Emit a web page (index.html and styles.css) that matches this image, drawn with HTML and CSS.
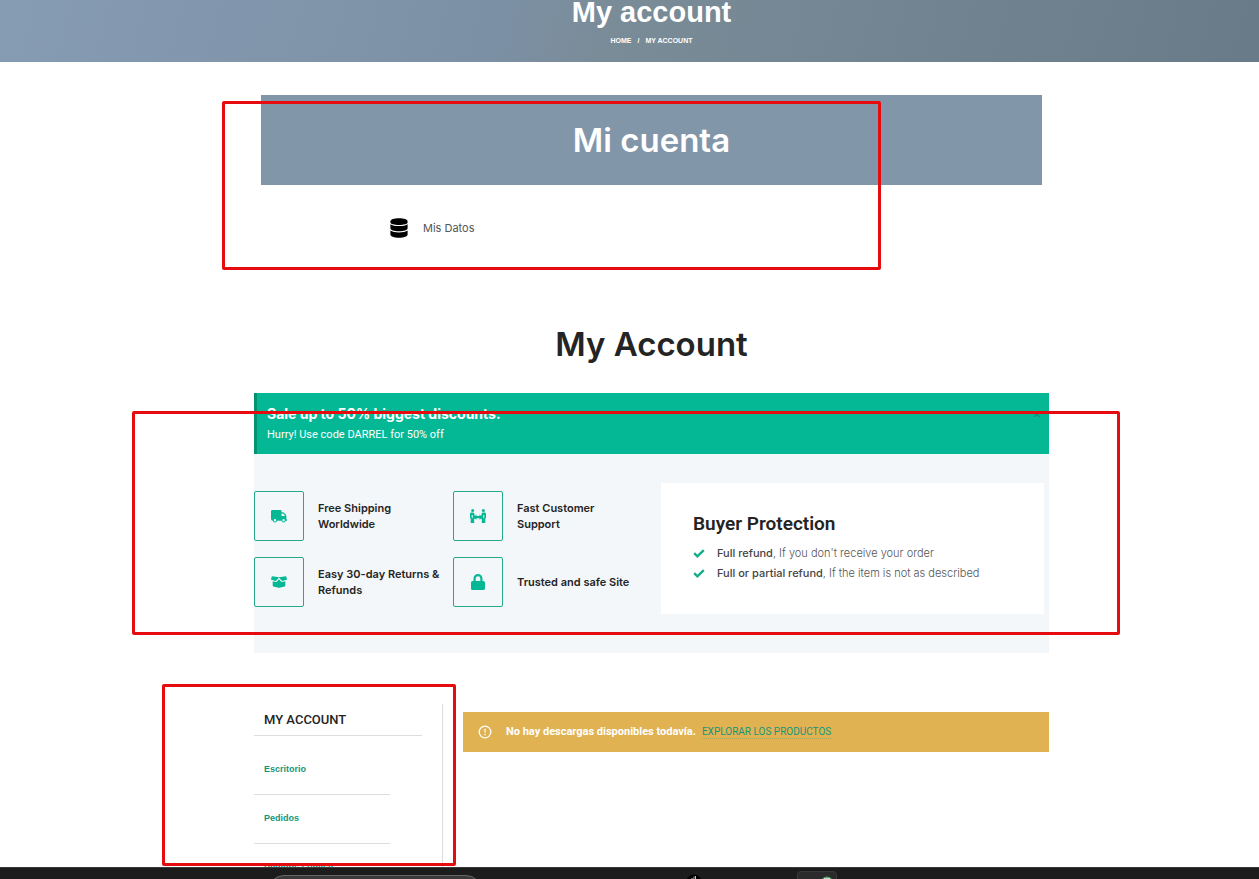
FILE: index.html
```html
<!DOCTYPE html>
<html lang="es">
<head>
    <meta charset="utf-8">
    <title>My account</title>
    <link rel="stylesheet" href="styles.css">
</head>
<body>
    <div class="page">
        <!-- Page title -->
        <header class="page-title">
            <h1>My account</h1>
            <nav class="breadcrumbs">
                <a href="#">Home</a>
                <span>/</span>
                <span>My account</span>
            </nav>
        </header>

        <main class="container">
            <!-- Mi cuenta -->
            <section class="mi-cuenta">
                <h2 class="banner">Mi cuenta</h2>
                <a class="datos" href="#">
                    <svg viewBox="0 0 18 20" width="18" height="20">
                        <path d="M.4 3.500C.4 1.500 4 .3 9 .3s8.600 1.200 8.600 3.200v.8C17.600 6.200 13.800 7 9 7S.4 6.200.4 4.300z"/>
                        <path d="M.4 6.300C2 7.600 5.500 8.100 9 8.100s7-.5 8.600-1.800v3.900c0 1.900-3.800 3-8.600 3s-8.600-1.100-8.600-3z"/>
                        <path d="M.4 12.600C2 13.900 5.500 14.500 9 14.500s7-.6 8.600-1.900v3.900c0 2-3.800 3.200-8.600 3.200s-8.600-1.200-8.600-3.200z"/>
                    </svg>
                    <span>Mis Datos</span>
                </a>
                <div class="mark mark-datos"></div>
            </section>

            <h2 class="heading">My Account</h2>

            <!-- Promo -->
            <section class="promo">
                <div class="alert">
                    <div>
                        <strong>Sale up to 50% biggest discounts.</strong>
                        <p>Hurry! Use code DARREL for 50% off</p>
                    </div>
                    <button class="close" aria-label="Cerrar">×</button>
                </div>
                <div class="benefits">
                    <ul class="features">
                        <li>
                            <span class="icon">
                                <svg viewBox="0 0 16 13" width="16" height="13">
                                    <path fill-rule="evenodd" d="M1.300 0h8.200q1 0 1 1v1.200h1.500q.6 0 1 .5l2 2.300q.4.400.4 1V9.500h.6v1.200h-1.200a2.200 2.200 0 0 1-4.300 0H6.100a2.200 2.200 0 0 1-4.300 0Q0 10.500 0 9V1.300Q0 0 1.300 0zM10.500 3.400v2.700h3.700L12 3.400zM4 9.100a1.200 1.200 0 1 0 0 2.400 1.200 1.200 0 0 0 0-2.400zm8.600 0a1.200 1.200 0 1 0 0 2.400 1.200 1.200 0 0 0 0-2.400z"/>
                                </svg>
                            </span>
                            <span>Free Shipping<br>Worldwide</span>
                        </li>
                        <li>
                            <span class="icon">
                                <svg viewBox="0 0 16 14" width="16" height="14">
                                    <circle cx="2.600" cy="1.500" r="1.500"/>
                                    <circle cx="13.400" cy="1.500" r="1.500"/>
                                    <path d="M0 5q0-1.400 1.400-1.400h1.700q1 0 1.200 1l.5 2.300L6.500 5.500v1.400h3V5.500l1.700 1.400.5-2.300q.2-1 1.200-1h1.700Q16 3.600 16 5v3.800l-.7 1V14h-3.500v-3.400l-.6-1.200-1.700 1.400V9.200h-3v1.600L4.800 9.400l-.6 1.200V14H.7V9.800l-.7-1z"/>
                                    <path class="cut" d="M1.700 6v2.500l1 .8V6zM14.300 6v2.500l-1 .8V6z"/>
                                </svg>
                            </span>
                            <span>Fast Customer<br>Support</span>
                        </li>
                        <li>
                            <span class="icon">
                                <svg viewBox="0 0 16 12" width="16" height="12">
                                    <path d="M1.300.3 8 1.200l6.700-.9q.4 0 .5.300l.8 2.600q0 .5-.4.600l-4.200 1.100q-.5.100-.8-.3L8 1.500 5.400 4.600q-.3.400-.8.300L.4 3.800Q0 3.700 0 3.200L.8.600q.1-.3.500-.3z"/>
                                    <path d="M1.700 5.200 5 6q.6.100 1-.4l2-2.400 2 2.400q.4.500 1 .4l3.300-.8v4.300q0 .8-.7 1L8.500 11.700q-.5.100-1 0L2.400 10.500q-.7-.2-.7-1z"/>
                                </svg>
                            </span>
                            <span>Easy 30-day Returns &amp;<br>Refunds</span>
                        </li>
                        <li>
                            <span class="icon">
                                <svg viewBox="0 0 14 16" width="14" height="16">
                                    <path fill-rule="evenodd" d="M2.500 7V4.500a4.500 4.500 0 0 1 9 0V7h.8Q14 7 14 8.600v5.800q0 1.600-1.600 1.600H1.600Q0 16 0 14.400V8.600Q0 7 1.700 7zm2.200 0h4.600V4.500a2.300 2.300 0 0 0-4.600 0z"/>
                                </svg>
                            </span>
                            <span>Trusted and safe Site</span>
                        </li>
                    </ul>
                    <div class="protection">
                        <h3>Buyer Protection</h3>
                        <ul>
                            <li>
                                <svg viewBox="0 0 12 9" width="12" height="9"><path d="M1.200 4.200 4.400 7.300 10.800 1.200"/></svg>
                                <span><b>Full refund</b>, If you don't receive your order</span>
                            </li>
                            <li>
                                <svg viewBox="0 0 12 9" width="12" height="9"><path d="M1.200 4.200 4.400 7.300 10.800 1.200"/></svg>
                                <span><b>Full or partial refund</b>, If the item is not as described</span>
                            </li>
                        </ul>
                    </div>
                </div>
                <div class="mark mark-promo"></div>
            </section>

            <!-- Account -->
            <section class="account">
                <aside class="sidebar">
                    <h3>My account</h3>
                    <nav>
                        <a href="#">Escritorio</a>
                        <a href="#">Pedidos</a>
                        <a href="#">Pedidos Lumise</a>
                    </nav>
                    <div class="mark mark-menu"></div>
                </aside>
                <div class="notice">
                    <svg viewBox="0 0 14 14" width="14" height="14">
                        <circle cx="7" cy="7" r="5.800"/>
                        <path d="M7 3.800v3.800M7 8.800v1.400"/>
                    </svg>
                    <span>No hay descargas disponibles todavía.</span>
                    <a href="#">Explorar los productos</a>
                </div>
            </section>
        </main>

        <!-- Taskbar -->
        <footer class="taskbar">
            <div class="search"></div>
            <svg class="app" viewBox="0 0 16 16" width="16" height="16">
                <circle cx="8" cy="8" r="7.500" fill="#000"/>
                <path d="M6 4v4M8 2.500V8M9.500 2v5" stroke="#bbb" fill="none"/>
            </svg>
            <div class="app-active">
                <svg viewBox="0 0 14 14" width="14" height="14">
                    <circle cx="7" cy="7" r="6.500" fill="#4fa06a"/>
                    <path d="M4 2.500h6M5 4h4" stroke="#c4d8c8" fill="none"/>
                </svg>
            </div>
        </footer>
    </div>
</body>
</html>
```

FILE: styles.css
```css
* {
    box-sizing: border-box;
}

body {
    margin: 0;
    background: #fff;
    color: #242424;
    font-family: Inter, sans-serif;
    font-size: 11px;
}

h1, h2, h3, p, ul {
    margin: 0;
    padding: 0;
}

ul {
    list-style: none;
}

.page {
    display: flex;
    flex-direction: column;
    height: 100vh;
    overflow: hidden;
}

/* Page title */
.page-title {
    flex: none;
    height: 62px;
    padding-left: 44px;
    background: linear-gradient(105deg, #869cb2 0%, #7c90a5 40%, #7a8c98 48%, #697b88 100%);
    color: #fff;
    text-align: center;
    font-family: "Liberation Sans", Arial, sans-serif;
}

.page-title h1 {
    font-size: 29px;
    line-height: 24px;
}

.breadcrumbs {
    display: flex;
    justify-content: center;
    gap: 6px;
    margin-top: 12px;
    font-size: 7px;
    line-height: 10px;
    font-weight: bold;
    text-transform: uppercase;
}

.breadcrumbs a {
    color: #fff;
    text-decoration: none;
}

.container {
    flex: 1;
    min-height: 0;
    width: 100%;
    max-width: 839px;
    margin: 0 auto;
    padding: 33px 0 0 44px;
}

/* Mi cuenta */
.mi-cuenta {
    position: relative;
    margin: 0 7px;
}

.banner {
    background: #8296aa;
    color: #fff;
    font-size: 33px;
    font-weight: 600;
    line-height: 90px;
    text-align: center;
}

.datos {
    display: flex;
    align-items: center;
    gap: 15px;
    padding: 33px 129px 31px;
    color: #555;
    text-decoration: none;
}

.datos svg {
    fill: #000;
}

.heading {
    margin-top: 53px;
    font-size: 33px;
    font-weight: 600;
    line-height: 44px;
    text-align: center;
}

/* Promo */
.promo {
    position: relative;
    margin-top: 27px;
}

.alert {
    display: flex;
    justify-content: space-between;
    padding: 11px 8px 9px 10px;
    border-left: 3px solid #069173;
    background: #05b895;
    color: #fff;
}

.alert strong {
    display: block;
    font-size: 14px;
    line-height: 20px;
}

.alert p {
    font-family: Roboto, sans-serif;
    line-height: 21px;
}

.close {
    align-self: flex-start;
    padding: 0;
    border: 0;
    background: none;
    color: #0b8a70;
    font-size: 14px;
    line-height: 20px;
}

.benefits {
    display: flex;
    justify-content: space-between;
    padding: 29px 5px 39px 0;
    background: #f4f7f9;
}

.features {
    display: grid;
    grid-template-columns: 183px 183px;
    gap: 16px;
    align-content: start;
    padding-top: 8px;
}

.features li {
    display: flex;
    align-items: center;
    gap: 14px;
    font-weight: 600;
    line-height: 16px;
    white-space: nowrap;
}

.icon {
    display: flex;
    flex: none;
    align-items: center;
    justify-content: center;
    width: 50px;
    height: 50px;
    border: 1px solid #27a88b;
    border-radius: 2px;
}

.icon svg {
    fill: #05b895;
}

.icon .cut {
    fill: #f4f7f9;
}

.protection {
    width: 383px;
    padding: 28px 32px 31px;
    background: #fff;
    color: #555;
    font-weight: 300;
}

.protection h3 {
    margin-bottom: 7px;
    color: #242424;
    font-family: Roboto, sans-serif;
    font-size: 19px;
    font-weight: 600;
    line-height: 25px;
}

.protection li {
    display: flex;
    align-items: center;
    gap: 12px;
    line-height: 20px;
}

.protection b {
    color: #444;
    font-weight: 500;
}

.protection svg {
    fill: none;
    stroke: #12ad8c;
    stroke-width: 2.4;
}

/* Account */
.account {
    display: flex;
    align-items: flex-start;
    gap: 20px;
    margin-top: 51px;
}

.sidebar {
    position: relative;
    flex: none;
    width: 189px;
    height: 220px;
    border-right: 1px solid #ddd;
}

.sidebar h3 {
    margin-right: 20px;
    padding: 7px 10px 6px;
    border-bottom: 1px solid #ddd;
    font-family: Roboto, sans-serif;
    font-size: 13px;
    font-weight: 500;
    line-height: 18px;
    text-transform: uppercase;
}

.sidebar nav {
    width: 136px;
    padding-top: 10px;
}

.sidebar nav a {
    display: block;
    padding: 15px 10px 17px;
    border-bottom: 1px solid #ddd;
    color: #15967a;
    font-family: "Liberation Sans", Arial, sans-serif;
    font-size: 9px;
    font-weight: bold;
    line-height: 16px;
    text-decoration: none;
}

.notice {
    display: flex;
    flex: 1;
    align-items: center;
    margin-top: 8px;
    padding: 10px 15px;
    background: #e0b252;
    color: #fff;
    font-family: Roboto, sans-serif;
    font-weight: bold;
    line-height: 20px;
}

.notice svg {
    margin-right: 14px;
    fill: none;
    stroke: #fff;
    stroke-width: 1.3;
}

.notice a {
    margin-left: 6px;
    border-bottom: 1px dotted #a9a65e;
    color: #15967a;
    font-size: 10px;
    font-weight: normal;
    line-height: 12px;
    text-decoration: none;
    text-transform: uppercase;
}

/* Red highlight boxes */
.mark {
    position: absolute;
    border: 3px solid #e60b0e;
    border-radius: 2px;
    pointer-events: none;
}

.mark-datos {
    inset: 6px 161px -1px -39px;
}

.mark-promo {
    inset: 18px -71px 18px -122px;
}

.mark-menu {
    top: -20px;
    left: -92px;
    right: -14px;
    height: 182px;
}

/* Taskbar */
.taskbar {
    z-index: 1;
    display: flex;
    flex: none;
    align-items: flex-start;
    height: 12px;
    padding-left: 268px;
    border-top: 1px solid #3a3a3a;
    background: #1c1c1c;
    overflow: hidden;
}

.search {
    width: 214px;
    height: 32px;
    margin-top: 7px;
    border: 1px solid #666;
    border-radius: 16px;
    background: #3a3a3a;
}

.app {
    margin: 6px 0 0 204px;
}

.app-active {
    width: 40px;
    height: 40px;
    margin: 3px 0 0 95px;
    padding: 4px 0 0 22px;
    border: 1px solid #393939;
    border-radius: 4px;
    background: #2b2b2b;
}
```
